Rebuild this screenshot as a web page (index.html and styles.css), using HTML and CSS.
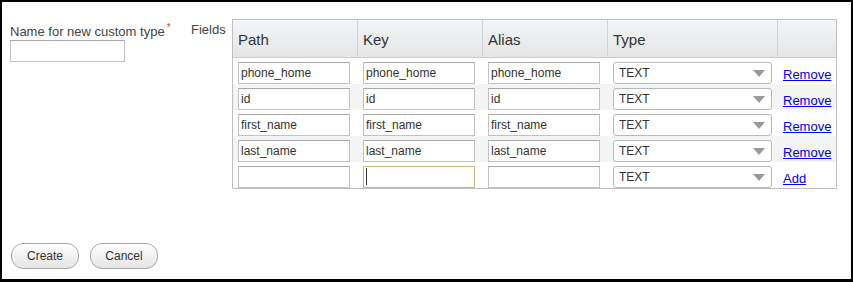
FILE: index.html
```html
<!DOCTYPE html>
<html>
<head>
  <meta charset="utf-8">
  <title>New custom type</title>
  <link rel="stylesheet" href="styles.css">
</head>
<body>
  <div class="dialog">
    <div class="form_row">
      <div class="name_field">
        <label class="field_label name_label" for="type_name">Name for new custom type<sup class="required">*</sup></label>
        <input type="text" id="type_name" class="name_input">
      </div>
      <div class="field_label fields_label">Fields</div>
      <table class="fields">
        <colgroup>
          <col class="col_text">
          <col class="col_text">
          <col class="col_text">
          <col class="col_type">
          <col class="col_action">
        </colgroup>
        <thead>
          <tr>
            <th>Path</th>
            <th>Key</th>
            <th>Alias</th>
            <th>Type</th>
            <th></th>
          </tr>
        </thead>
        <tbody>
          <tr>
            <td><input type="text" class="cell_input" value="phone_home"></td>
            <td><input type="text" class="cell_input" value="phone_home"></td>
            <td><input type="text" class="cell_input" value="phone_home"></td>
            <td>
              <div class="select_wrap">
                <select class="type_select"><option>TEXT</option></select>
                <svg class="select_arrow" width="12" height="7" viewBox="0 0 12 7"><path d="M0 0h12L6 7z" fill="#9a9a9a"/></svg>
              </div>
            </td>
            <td class="action"><a href="#">Remove</a></td>
          </tr>
          <tr>
            <td><input type="text" class="cell_input" value="id"></td>
            <td><input type="text" class="cell_input" value="id"></td>
            <td><input type="text" class="cell_input" value="id"></td>
            <td>
              <div class="select_wrap">
                <select class="type_select"><option>TEXT</option></select>
                <svg class="select_arrow" width="12" height="7" viewBox="0 0 12 7"><path d="M0 0h12L6 7z" fill="#9a9a9a"/></svg>
              </div>
            </td>
            <td class="action"><a href="#">Remove</a></td>
          </tr>
          <tr>
            <td><input type="text" class="cell_input" value="first_name"></td>
            <td><input type="text" class="cell_input" value="first_name"></td>
            <td><input type="text" class="cell_input" value="first_name"></td>
            <td>
              <div class="select_wrap">
                <select class="type_select"><option>TEXT</option></select>
                <svg class="select_arrow" width="12" height="7" viewBox="0 0 12 7"><path d="M0 0h12L6 7z" fill="#9a9a9a"/></svg>
              </div>
            </td>
            <td class="action"><a href="#">Remove</a></td>
          </tr>
          <tr>
            <td><input type="text" class="cell_input" value="last_name"></td>
            <td><input type="text" class="cell_input" value="last_name"></td>
            <td><input type="text" class="cell_input" value="last_name"></td>
            <td>
              <div class="select_wrap">
                <select class="type_select"><option>TEXT</option></select>
                <svg class="select_arrow" width="12" height="7" viewBox="0 0 12 7"><path d="M0 0h12L6 7z" fill="#9a9a9a"/></svg>
              </div>
            </td>
            <td class="action"><a href="#">Remove</a></td>
          </tr>
          <tr>
            <td><input type="text" class="cell_input"></td>
            <td><span class="caret_wrap"><input type="text" class="cell_input focused"></span></td>
            <td><input type="text" class="cell_input"></td>
            <td>
              <div class="select_wrap">
                <select class="type_select"><option>TEXT</option></select>
                <svg class="select_arrow" width="12" height="7" viewBox="0 0 12 7"><path d="M0 0h12L6 7z" fill="#9a9a9a"/></svg>
              </div>
            </td>
            <td class="action"><a href="#">Add</a></td>
          </tr>
        </tbody>
      </table>
    </div>
    <div class="actions">
      <button class="btn">Create</button>
      <button class="btn">Cancel</button>
    </div>
  </div>
</body>
</html>
```

FILE: styles.css
```css
body {
  margin: 0;
  background-color: #fff;
  font-family: "Liberation Sans", Arial, sans-serif;
  color: #333;
}
.dialog {
  box-sizing: border-box;
  width: 853px;
  height: 282px;
  border: 2px solid #000;
  border-bottom-width: 3px;
  display: flex;
  flex-direction: column;
}
.form_row {
  display: flex;
  align-items: flex-start;
  padding: 17px 0 0 8px;
}
.name_field {
  width: 181px;
  display: flex;
  flex-direction: column;
  align-items: flex-start;
}
.field_label {
  font-size: 13px;
  line-height: 15px;
  color: #444;
}
.name_label {
  margin-top: 5px;
}
.required {
  color: #e8383d;
  font-size: 10px;
  line-height: 0;
  margin-left: 2px;
}
.name_input {
  box-sizing: border-box;
  width: 115px;
  height: 22px;
  margin: 1px 0 0;
  border: 1px solid #c2c2c2;
  border-top-color: #a8a8a8;
  padding: 0 2px;
  font: 12px "Liberation Sans", Arial, sans-serif;
}
.fields_label {
  width: 41px;
  margin-top: 3px;
}
.fields {
  table-layout: fixed;
  width: 605px;
  border-collapse: separate;
  border-spacing: 0;
  border: 1px solid #bdbfc0;
}
.col_text {
  width: 125px;
}
.col_type {
  width: 170px;
}
.col_action {
  width: 58px;
}
.fields th {
  text-align: left;
  font-weight: normal;
  font-size: 15px;
  line-height: 17px;
  color: #333;
  padding: 11px 5px 9px;
  background: linear-gradient(#f4f5f6, #e3e5e7);
  border-right: 1px solid #d0d3d5;
  border-bottom: 1px solid #c9cccd;
}
.fields th:last-child {
  border-right: none;
}
.fields td {
  padding: 4px 5px 0;
  vertical-align: top;
}
.fields tbody tr:nth-child(even) td {
  background-color: #f3f4f4;
}
.cell_input {
  display: block;
  box-sizing: border-box;
  width: 112px;
  height: 22px;
  margin: 0;
  border: 1px solid #c2c2c2;
  border-top-color: #a8a8a8;
  padding: 0 2px;
  font: 12px "Liberation Sans", Arial, sans-serif;
  color: #333;
  background: #fff;
}
.cell_input.focused {
  border-color: #cbb878;
  outline: none;
}
.caret_wrap {
  display: block;
  position: relative;
}
.caret_wrap::after {
  content: "";
  position: absolute;
  left: 3px;
  top: 2px;
  width: 1px;
  height: 17px;
  background: #333;
}
.select_wrap {
  position: relative;
  width: 159px;
}
.type_select {
  display: block;
  box-sizing: border-box;
  width: 159px;
  height: 22px;
  margin: 0;
  border: 1px solid #b9b9b9;
  border-radius: 3px;
  padding: 0 0 0 5px;
  background: #fff;
  font: 12px "Liberation Sans", Arial, sans-serif;
  color: #333;
  appearance: none;
  -webkit-appearance: none;
}
.select_arrow {
  position: absolute;
  right: 7px;
  top: 8px;
}
.fields td.action {
  padding-top: 9px;
  font-size: 13px;
  line-height: 15px;
}
.action a {
  color: #0000ee;
}
.actions {
  margin-top: auto;
  padding: 0 0 10px 9px;
  display: flex;
  gap: 11px;
}
.btn {
  box-sizing: border-box;
  width: 68px;
  height: 26px;
  border: 1px solid #a9a9a9;
  border-radius: 12px;
  background: linear-gradient(#fefefe, #e5e5e5);
  font: 12px "Liberation Sans", Arial, sans-serif;
  color: #333;
  padding: 0;
}
```
